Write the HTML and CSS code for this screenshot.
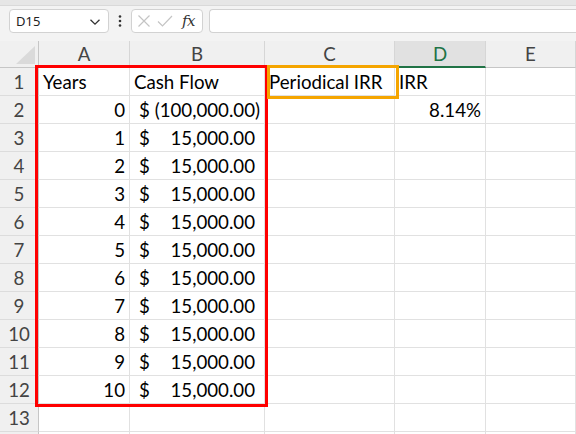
FILE: index.html
```html
<!DOCTYPE html>
<html>
<head>
<meta charset="utf-8">
<link rel="stylesheet" href="styles.css">
</head>
<body>
<div class="app">
  <div class="edge"></div>
  <div class="toolbar">
    <div class="namebox">
      <span class="nb-text">D15</span>
      <svg class="chev" width="12" height="8" viewBox="0 0 12 8"><path d="M1.5 1.8 L6 6.2 L10.5 1.8" fill="none" stroke="#333" stroke-width="1.3"/></svg>
    </div>
    <div class="kebab">
      <svg width="4" height="12" viewBox="0 0 4 12"><circle cx="2" cy="1.5" r="1.3" fill="#333"/><circle cx="2" cy="6" r="1.3" fill="#333"/><circle cx="2" cy="10.5" r="1.3" fill="#333"/></svg>
    </div>
    <div class="fbtns">
      <svg width="14" height="14" viewBox="0 0 14 14"><path d="M1.5 1.5 L12.5 12.5 M12.5 1.5 L1.5 12.5" stroke="#c4c4c4" stroke-width="1.2" fill="none"/></svg>
      <svg width="16" height="14" viewBox="0 0 16 14"><path d="M1 7.5 L5.5 12 L15 2" stroke="#c4c4c4" stroke-width="1.2" fill="none"/></svg>
      <span class="fx">fx</span>
    </div>
    <div class="finput"></div>
  </div>
  <div class="sheet">
    <div class="corner"><span class="tri"></span></div>
    <div class="ch">A</div>
    <div class="ch">B</div>
    <div class="ch">C</div>
    <div class="ch sel">D</div>
    <div class="ch">E</div>

    <div class="rh">1</div><div class="c">Years</div><div class="c">Cash Flow</div><div class="c">Periodical IRR</div><div class="c">IRR</div><div class="c"></div>
    <div class="rh">2</div><div class="c r">0</div><div class="c acc"><span><span class="ph">(</span>$</span><span>(100,000.00)</span></div><div class="c"></div><div class="c r">8.14%</div><div class="c"></div>
    <div class="rh">3</div><div class="c r">1</div><div class="c acc"><span><span class="ph">(</span>$</span><span>15,000.00<span class="ph">)</span></span></div><div class="c"></div><div class="c"></div><div class="c"></div>
    <div class="rh">4</div><div class="c r">2</div><div class="c acc"><span><span class="ph">(</span>$</span><span>15,000.00<span class="ph">)</span></span></div><div class="c"></div><div class="c"></div><div class="c"></div>
    <div class="rh">5</div><div class="c r">3</div><div class="c acc"><span><span class="ph">(</span>$</span><span>15,000.00<span class="ph">)</span></span></div><div class="c"></div><div class="c"></div><div class="c"></div>
    <div class="rh">6</div><div class="c r">4</div><div class="c acc"><span><span class="ph">(</span>$</span><span>15,000.00<span class="ph">)</span></span></div><div class="c"></div><div class="c"></div><div class="c"></div>
    <div class="rh">7</div><div class="c r">5</div><div class="c acc"><span><span class="ph">(</span>$</span><span>15,000.00<span class="ph">)</span></span></div><div class="c"></div><div class="c"></div><div class="c"></div>
    <div class="rh">8</div><div class="c r">6</div><div class="c acc"><span><span class="ph">(</span>$</span><span>15,000.00<span class="ph">)</span></span></div><div class="c"></div><div class="c"></div><div class="c"></div>
    <div class="rh">9</div><div class="c r">7</div><div class="c acc"><span><span class="ph">(</span>$</span><span>15,000.00<span class="ph">)</span></span></div><div class="c"></div><div class="c"></div><div class="c"></div>
    <div class="rh">10</div><div class="c r">8</div><div class="c acc"><span><span class="ph">(</span>$</span><span>15,000.00<span class="ph">)</span></span></div><div class="c"></div><div class="c"></div><div class="c"></div>
    <div class="rh">11</div><div class="c r">9</div><div class="c acc"><span><span class="ph">(</span>$</span><span>15,000.00<span class="ph">)</span></span></div><div class="c"></div><div class="c"></div><div class="c"></div>
    <div class="rh">12</div><div class="c r">10</div><div class="c acc"><span><span class="ph">(</span>$</span><span>15,000.00<span class="ph">)</span></span></div><div class="c"></div><div class="c"></div><div class="c"></div>
    <div class="rh">13</div><div class="c"></div><div class="c"></div><div class="c"></div><div class="c"></div><div class="c"></div>
    <div class="rh"></div><div class="c"></div><div class="c"></div><div class="c"></div><div class="c"></div><div class="c"></div>

    <div class="box-red"></div>
    <div class="box-orange"></div>
  </div>
</div>
</body>
</html>
```

FILE: styles.css
```css
html, body {
  margin: 0;
  padding: 0;
  background: #ffffff;
}
.app {
  width: 576px;
  height: 434px;
  overflow: hidden;
  background: #f3f3f3;
}
.edge {
  height: 5px;
  background: #e6e6e6;
  border-bottom: 1px solid #d9d9d9;
}
.toolbar {
  height: 35px;
  display: flex;
  align-items: flex-start;
  padding-top: 3px;
  box-sizing: border-box;
  background: #f3f3f3;
}
.namebox {
  margin-left: 9px;
  width: 100px;
  height: 24px;
  box-sizing: border-box;
  background: #fff;
  border: 1px solid #d2d2d2;
  border-radius: 4px;
  display: flex;
  align-items: center;
  justify-content: space-between;
  padding: 0 7px 0 6px;
  font-family: "Noto Sans", sans-serif;
  font-size: 13px;
  color: #222;
}
.chev { margin-top: 1px; }
.kebab {
  width: 22px;
  height: 24px;
  display: flex;
  align-items: center;
  justify-content: center;
}
.fbtns {
  width: 72px;
  height: 24px;
  box-sizing: border-box;
  background: #fff;
  border: 1px solid #d2d2d2;
  border-radius: 4px;
  display: flex;
  align-items: center;
  gap: 6px;
  padding-left: 5px;
}
.fx {
  font-family: "DejaVu Serif", "Liberation Serif", serif;
  font-style: italic;
  font-size: 15px;
  color: #333;
  margin-left: 3px;
  letter-spacing: -0.5px;
}
.finput {
  margin-left: 6px;
  flex: 1;
  height: 24px;
  box-sizing: border-box;
  background: #fff;
  border: 1px solid #d2d2d2;
  border-right: none;
  border-radius: 4px 0 0 4px;
}
.sheet {
  position: relative;
  display: grid;
  grid-template-columns: 39px 91px 135px 130px 91px 90px;
  grid-template-rows: 27px repeat(14, 28px);
  font-family: Lato, "Open Sans", sans-serif;
  font-size: 18.7px;
  color: #000;
  background: #fff;
}
.corner {
  position: relative;
  background: #f0f0f0;
  border-right: 1px solid #c6c6c6;
  border-bottom: 1px solid #c6c6c6;
  box-sizing: border-box;
}
.tri {
  position: absolute;
  right: 3px;
  bottom: 3px;
  width: 0;
  height: 0;
  border-left: 19px solid transparent;
  border-bottom: 18px solid #dadada;
}
.ch {
  background: #f0f0f0;
  border-right: 1px solid #d6d6d6;
  border-bottom: 1px solid #c6c6c6;
  box-sizing: border-box;
  color: #444;
  display: flex;
  align-items: center;
  justify-content: center;
  line-height: 27px;
  padding-top: 1px;
}
.ch.sel {
  background: #e1e1e1;
  color: #217346;
  border-bottom: 2px solid #217346;
}
.rh {
  background: #f0f0f0;
  border-right: 1px solid #c6c6c6;
  border-bottom: 1px solid #dcdcdc;
  box-sizing: border-box;
  color: #444;
  text-align: center;
  line-height: 28px;
}
.c {
  border-right: 1px solid #e1e1e1;
  border-bottom: 1px solid #e1e1e1;
  box-sizing: border-box;
  line-height: 28px;
  padding: 0 4px;
  white-space: nowrap;
  overflow: visible;
}
.c.r { text-align: right; }
.c.acc {
  display: flex;
  justify-content: space-between;
}
.ph { visibility: hidden; }
.box-red {
  position: absolute;
  left: 35px;
  top: 24px;
  width: 233px;
  height: 342px;
  box-sizing: border-box;
  border: 3px solid #ff0000;
}
.box-orange {
  position: absolute;
  left: 267px;
  top: 24px;
  width: 132px;
  height: 34px;
  box-sizing: border-box;
  border: 3px solid #f5a500;
}
```
